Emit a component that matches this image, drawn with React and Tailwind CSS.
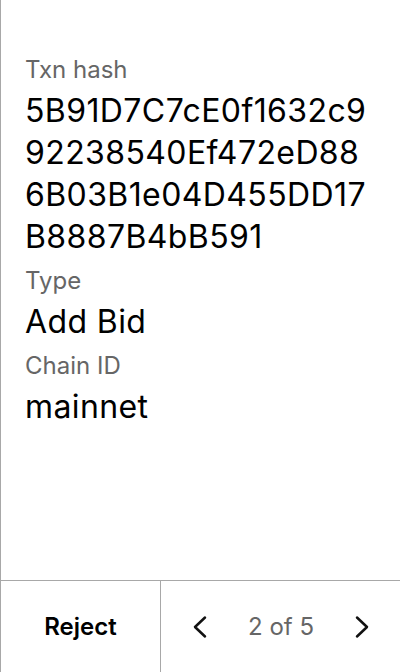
const fields = [
  { label: "Txn hash", value: "5B91D7C7cE0f1632c992238540Ef472eD886B03B1e04D455DD17B8887B4bB591" },
  { label: "Type", value: "Add Bid" },
  { label: "Chain ID", value: "mainnet" },
];

const Chevron = ({ dir }) => (
  <svg width="16" height="24" viewBox="0 0 16 24" fill="none" stroke="#111" strokeWidth="2.5" strokeLinecap="round" strokeLinejoin="round">
    {dir === "left" ? <polyline points="13,2.5 3,12 13,21.5" /> : <polyline points="3,2.5 13,12 3,21.5" />}
  </svg>
);

const App = () => {
  return (
    <div className="w-[400px] h-[672px] flex flex-col bg-white border-l border-[#a8a8a8] font-['Inter',sans-serif]">
      <div className="flex-1 px-6 pt-[54px] flex flex-col gap-[7px]">
        {fields.map((f) => (
          <div key={f.label} className="flex flex-col gap-[4px]">
            <div className="text-[24px] leading-8 text-[#666]">{f.label}</div>
            <div className="text-[32px] leading-[42px] tracking-[0.4px] text-black break-all">{f.value}</div>
          </div>
        ))}
      </div>
      <div className="h-[92px] flex border-t border-[#a8a8a8]">
        <button className="w-[160px] flex items-center justify-center text-[24px] font-semibold text-black border-r border-[#a8a8a8]">
          Reject
        </button>
        <div className="flex-1 flex items-center justify-between pl-[31px] pr-[30px]">
          <Chevron dir="left" />
          <span className="text-[24px] text-[#666]">2 of 5</span>
          <Chevron dir="right" />
        </div>
      </div>
    </div>
  );
};

export default App;
